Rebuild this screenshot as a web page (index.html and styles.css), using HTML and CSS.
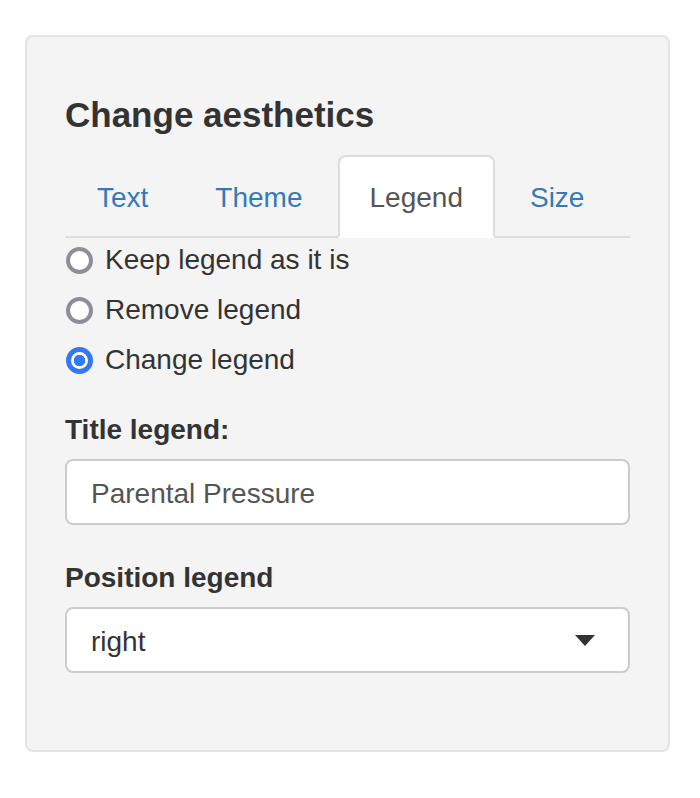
FILE: index.html
```html
<!DOCTYPE html>
<html>
<head>
<meta charset="utf-8">
<link rel="stylesheet" href="styles.css">
</head>
<body>
<div class="well">
  <h4 class="heading">Change aesthetics</h4>
  <ul class="nav-tabs">
    <li><a>Text</a></li>
    <li><a>Theme</a></li>
    <li class="active"><a>Legend</a></li>
    <li><a>Size</a></li>
  </ul>
  <div class="tab-content">
    <div class="radios">
      <label class="radio"><span class="dot"></span><span>Keep legend as it is</span></label>
      <label class="radio"><span class="dot"></span><span>Remove legend</span></label>
      <label class="radio"><span class="dot checked"></span><span>Change legend</span></label>
    </div>
    <div class="form-group">
      <div class="control-label">Title legend:</div>
      <div class="form-control input">Parental Pressure</div>
    </div>
    <div class="form-group last">
      <div class="control-label">Position legend</div>
      <div class="form-control select">
        <span>right</span>
        <svg class="caret" width="20" height="11" viewBox="0 0 20 11"><polygon points="0,0 20,0 10,11" fill="#333"/></svg>
      </div>
    </div>
  </div>
</div>
</body>
</html>
```
FILE: styles.css
```css
body {
  margin: 0;
  background: #fff;
  font-family: "Liberation Sans", Arial, sans-serif;
  font-size: 28px;
  line-height: 40px;
  color: #333;
}

.well {
  box-sizing: border-box;
  width: 645px;
  margin: 35px 0 0 25px;
  padding: 38px;
  background: #f4f4f4;
  border: 2px solid #e3e3e3;
  border-radius: 8px;
}

.heading {
  margin: 20px 0 20px;
  font-size: 35px;
  line-height: 40px;
  font-weight: bold;
  color: #333;
}

.nav-tabs {
  display: flex;
  margin: 0;
  padding: 0;
  list-style: none;
  border-bottom: 2px solid #ddd;
}

.nav-tabs li {
  margin-bottom: -2px;
}

.nav-tabs a {
  display: block;
  padding: 21px 30px 18px;
  margin-right: 3px;
  line-height: 40px;
  border: 2px solid transparent;
  border-radius: 8px 8px 0 0;
  color: #337ab7;
}

.nav-tabs .active a {
  background: #fff;
  border-color: #ddd #ddd transparent;
  color: #555;
}

.tab-content {
  padding-top: 2px;
}

.radios {
  display: flex;
  flex-direction: column;
  gap: 10px;
  margin-bottom: 30px;
}

.radio {
  display: flex;
  align-items: center;
  height: 40px;
  gap: 12px;
  padding-left: 1px;
}

.dot {
  box-sizing: border-box;
  width: 27px;
  height: 27px;
  border-radius: 50%;
  border: 4px solid #8e8e98;
  background: #fff;
  flex: none;
}

.dot.checked {
  border: 5px solid #3478f6;
  background: radial-gradient(circle, #3478f6 0 5.5px, #fff 6px);
}

.form-group {
  margin-bottom: 33px;
}

.form-group.last {
  margin-bottom: 39px;
}

.control-label {
  font-weight: bold;
  margin-bottom: 9px;
}

.form-control {
  box-sizing: border-box;
  height: 66px;
  padding: 4px 24px 0;
  display: flex;
  align-items: center;
  background: #fff;
  border: 2px solid #ccc;
  border-radius: 8px;
}

.input {
  color: #555;
}

.select {
  justify-content: space-between;
  padding-right: 33px;
  color: #333;
}

.caret {
  display: block;
  margin-top: -4px;
}
```
